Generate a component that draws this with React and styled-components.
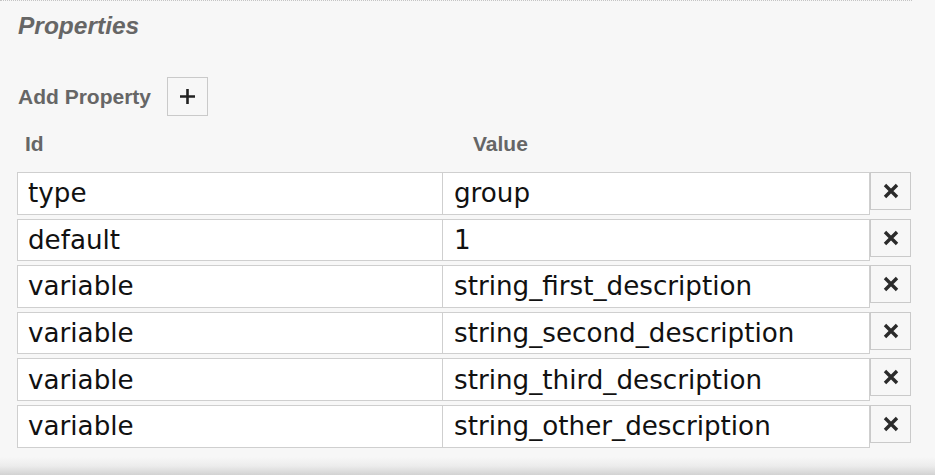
import React from "react";
import styled, { createGlobalStyle } from "styled-components";

const GlobalStyle = createGlobalStyle`
    html, body {
        margin: 0;
        padding: 0;
        background: #f7f7f7;
    }
`

const Page = styled.div`
    height: 475px;
    display: flex;
    flex-direction: column;
    overflow: hidden;
`

const Panel = styled.div`
    width: 895px;
    padding-left: 17px;
    border-top: 1px dotted #c4c4c4;
    flex: 1;
`

const Title = styled.h2`
    margin: 11px 0 0 1px;
    font-family: "Liberation Sans", Arial, sans-serif;
    font-style: italic;
    font-weight: bold;
    font-size: 24.5px;
    line-height: 28px;
    color: #666;
`

const AddRow = styled.div`
    display: flex;
    align-items: center;
    gap: 16px;
    margin-top: 37px;
`

const Label = styled.span`
    font-family: "Liberation Sans", Arial, sans-serif;
    font-weight: bold;
    font-size: ${props => props.size || '21px'};
    color: #666;
    padding-left: ${props => props.indent || '1px'};
`

const SquareButton = styled.button`
    width: 41px;
    height: ${props => props.h || '39px'};
    padding: 0;
    margin: 0;
    border: 1px solid #cacaca;
    background: #f7f7f7;
    display: flex;
    align-items: center;
    justify-content: center;
    cursor: pointer;
`

const Grid = styled.div`
    display: grid;
    grid-template-columns: 426px 427px 41px;
    align-items: start;
`

const HeaderRow = styled(Grid)`
    height: 56px;
    align-items: center;
`

const PropRow = styled(Grid)`
    margin-bottom: 4px;
`

const Cell = styled.input`
    box-sizing: border-box;
    height: 42.6px;
    width: ${props => props.wide ? '427px' : '426px'};
    margin: 0;
    padding: 0 10px 0 ${props => props.wide ? '11px' : '10px'};
    border: 1px solid #cfcfcf;
    border-left: ${props => props.wide ? 'none' : '1px solid #cfcfcf'};
    background: #fff;
    font-family: "DejaVu Sans", Verdana, sans-serif;
    font-size: 26.2px;
    color: #111;
    outline: none;
`

const BottomShade = styled.div`
    height: 18px;
    flex-shrink: 0;
    background: linear-gradient(to bottom, #f7f7f7 0%, #ececec 50%, #d2d2d2 100%);
`

const PlusIcon = () => (
    <svg width="17" height="17" viewBox="0 0 17 17">
        <path d="M8.5 1v15M1 8.5h15" stroke="#222" strokeWidth="2.6" />
    </svg>
)

const CloseIcon = () => (
    <svg width="16" height="16" viewBox="0 0 16 16">
        <path d="M3.2 3.2l9.6 9.6M12.8 3.2l-9.6 9.6" stroke="#2b2b2b" strokeWidth="3.4" strokeLinecap="square" />
    </svg>
)

const props = [
    ['type', 'group'],
    ['default', '1'],
    ['variable', 'string_first_description'],
    ['variable', 'string_second_description'],
    ['variable', 'string_third_description'],
    ['variable', 'string_other_description'],
]

export default function App() {
    return (
        <Page>
            <GlobalStyle />
            <Panel>
                <Title>Properties</Title>
                <AddRow>
                    <Label>Add Property</Label>
                    <SquareButton><PlusIcon /></SquareButton>
                </AddRow>
                <HeaderRow>
                    <Label indent="8px">Id</Label>
                    <Label indent="30px">Value</Label>
                </HeaderRow>
                {props.map(([id, value], i) => (
                    <PropRow key={i}>
                        <Cell defaultValue={id} />
                        <Cell wide defaultValue={value} />
                        <SquareButton h="38px"><CloseIcon /></SquareButton>
                    </PropRow>
                ))}
            </Panel>
            <BottomShade />
        </Page>
    )
}
